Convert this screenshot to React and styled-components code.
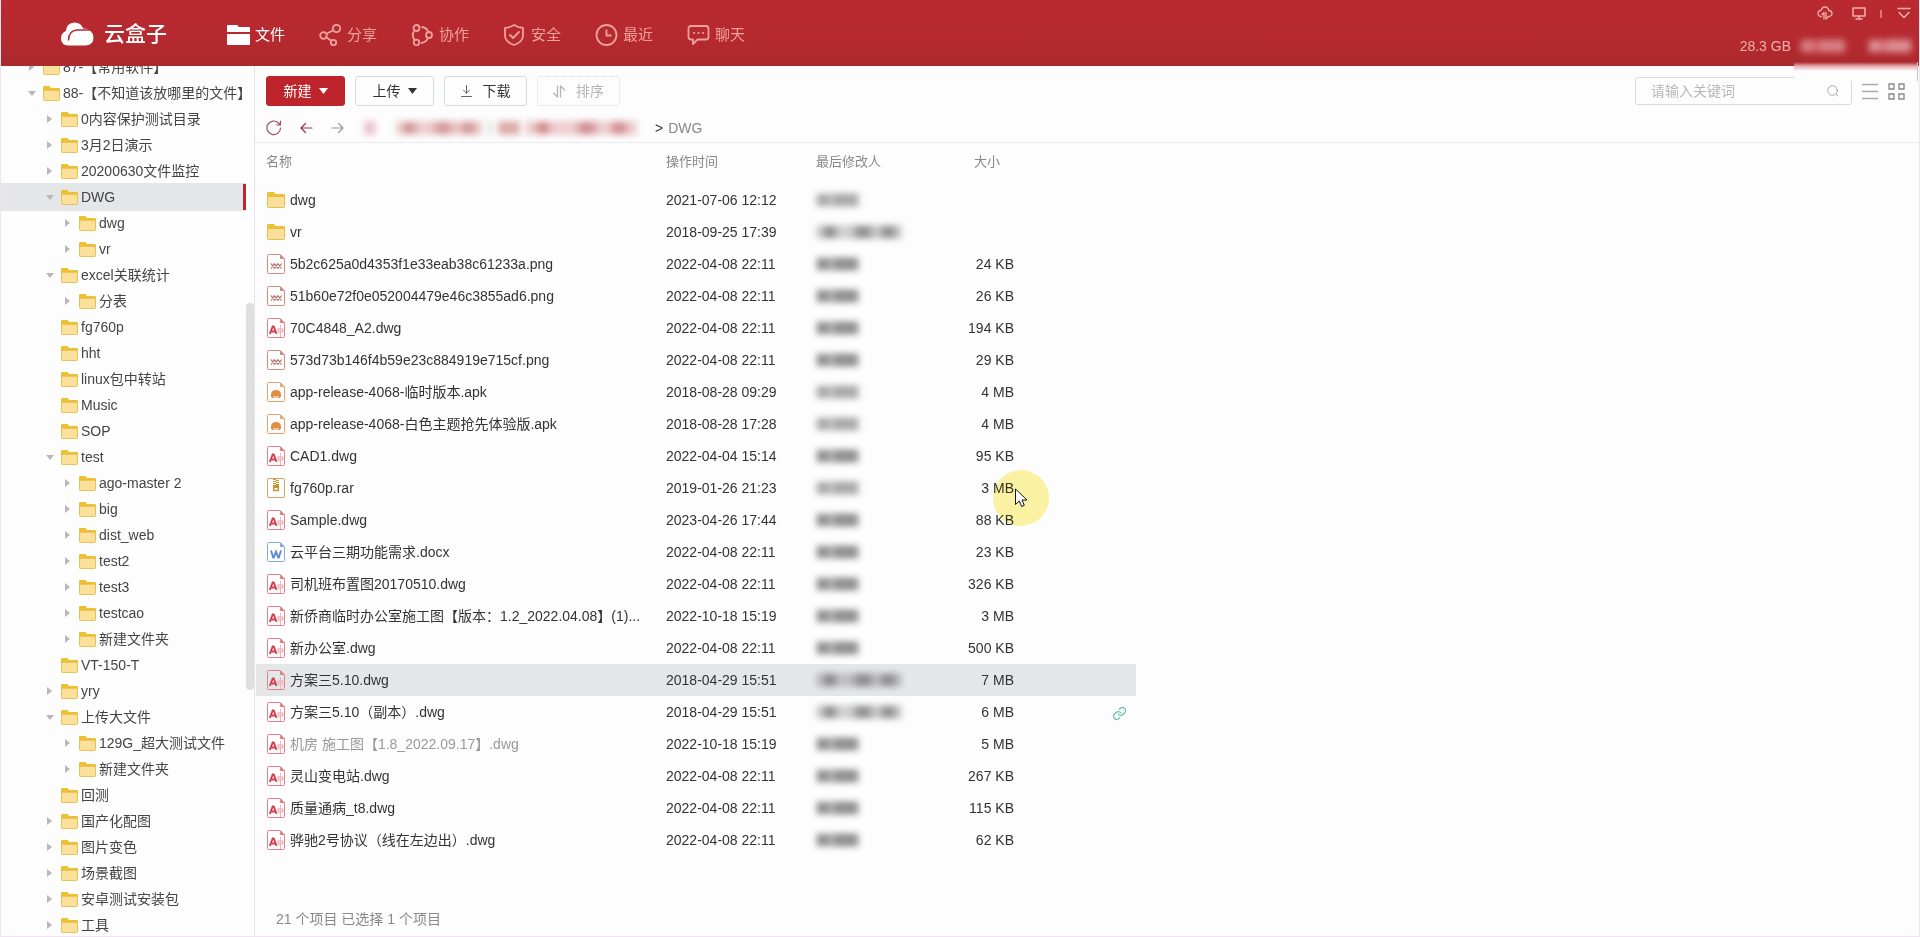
import styled, { createGlobalStyle } from "styled-components";

const GlobalStyle = createGlobalStyle`
  * {
    box-sizing: border-box;
  }
  body {
    margin: 0;
    background: #fdfdfd;
    color: #333;
    font-family: "Liberation Sans", "Noto Sans CJK SC", sans-serif;
    font-size: 14px;
    line-height: 20px;
  }
  button, input {
    font-family: inherit;
    font-size: 14px;
    line-height: 20px;
  }
  button {
    padding: 0;
    border: 0;
    background: none;
    color: inherit;
    cursor: pointer;
  }
  svg {
    display: block;
    flex: none;
  }
`;

const Page = styled.div`
  display: flex;
  flex-direction: column;
  height: 100vh;
  border: 1px solid #f0e4f0;
  border-top: 0;
  overflow: hidden;
`;

/* ---------- header ---------- */
const Header = styled.header`
  position: relative;
  display: flex;
  flex: none;
  height: 66px;
  margin: 0 -1px;
  padding-left: 61px;
  background: linear-gradient(#ba2a30, #b5292f 60%, #aa2a2d);
  color: #fff;
`;

const Logo = styled.a`
  display: flex;
  align-items: center;
  gap: 10px;
  width: 166px;
  padding-top: 2px;
  color: #fff;
  font-size: 21px;
  font-weight: 500;
  line-height: 28px;
  text-decoration: none;
`;

const Nav = styled.nav`
  display: flex;
  padding-top: 3px;
`;

const NavLink = styled.a`
  display: flex;
  align-items: center;
  gap: 5px;
  width: 92px;
  color: ${(p) => (p.$active ? "#fff" : "#f0a19d")};
  font-size: 15px;
  white-space: nowrap;
  text-decoration: none;
`;

const HeaderRight = styled.div`
  display: flex;
  flex-direction: column;
  align-items: flex-end;
  margin-left: auto;
  color: #f0b0aa;
`;

const WindowTools = styled.div`
  display: flex;
  align-items: center;
  height: 26px;
  gap: 19px;
  padding-right: 9px;
`;

const Separator = styled.span`
  width: 2px;
  height: 8px;
  margin: 2px -4px 0 -5px;
  background: #d67a78;
`;

const Account = styled.div`
  display: flex;
  align-items: center;
  height: 40px;
  gap: 22px;
  padding-right: 8px;
`;

const Quota = styled.span`
  margin-right: -13px;
`;

const Haze = styled.div`
  position: absolute;
  right: 2px;
  bottom: -15px;
  width: 124px;
  height: 19px;
  border-right: 1px solid #c9bfc4;
  background: linear-gradient(#b02a2e00, #e3a7ab 4px, #fdfdfd 9px);
`;

/* ---------- masked text ---------- */
const Mask = styled.span`
  display: block;
  width: ${(p) => p.$w}px;
  height: 14px;
  background: radial-gradient(circle at 16% 50%, ${(p) => p.$tone} 2px, transparent 10px),
    radial-gradient(circle at 55% 50%, ${(p) => p.$tone} 1px, transparent 14px),
    radial-gradient(circle at 84% 50%, ${(p) => p.$tone} 1px, transparent 12px), ${(p) => p.$base};
  filter: blur(3px);
  opacity: ${(p) => p.$opacity || 1};
`;

/* ---------- sidebar ---------- */
const Body = styled.div`
  display: flex;
  flex: 1;
  min-height: 0;
`;

const Sidebar = styled.aside`
  position: relative;
  flex: none;
  width: 254px;
  border-right: 1px solid #f0dcee;
  overflow: hidden;
`;

const Tree = styled.ul`
  margin: -12px 8px 0 0;
  padding: 0;
  list-style: none;
`;

const TreeItem = styled.button`
  display: flex;
  align-items: center;
  width: 100%;
  height: 26px;
  padding-left: ${(p) => 27 + p.$level * 18}px;
  color: #444;
  white-space: nowrap;
  ${(p) =>
    p.$active &&
    `
    background: #e5e6e8;
    border-right: 3px solid #bb2730;
    box-shadow: 0 -1px #e5e6e8, 0 1px #e5e6e8;
  `}
`;

const Arrow = styled.span`
  display: flex;
  width: 8px;
  margin-right: 7px;
`;

const TreeLabel = styled.span`
  margin-left: 3px;
`;

const ScrollThumb = styled.div`
  position: absolute;
  top: 237px;
  right: 0;
  width: 8px;
  height: 387px;
  border-radius: 4px;
  background: #dfdfe1;
`;

/* ---------- main ---------- */
const Main = styled.main`
  display: flex;
  flex: 1;
  flex-direction: column;
  min-width: 0;
`;

const Toolbar = styled.div`
  display: flex;
  align-items: center;
  gap: 10px;
  padding: 10px 14px 0 11px;
`;

const ToolButton = styled.button`
  display: flex;
  align-items: center;
  justify-content: center;
  gap: ${(p) => (p.$wide ? 11 : 7)}px;
  width: ${(p) => (p.$wide ? 83 : 79)}px;
  height: 30px;
  border: 1px solid #d5dcdc;
  border-radius: 3px;
  color: #333;
  ${(p) => p.$primary && "background: #bd242b; border-color: #bd242b; color: #fff;"}
  &:disabled {
    border: 1px dotted #dcdcdc;
    color: #b4b4b4;
    cursor: default;
  }
`;

const SearchBox = styled.label`
  display: flex;
  align-items: center;
  width: 217px;
  height: 28px;
  margin-left: auto;
  padding: 0 12px 0 15px;
  border: 1px solid #d5dcdc;
  border-radius: 3px;
  input {
    flex: 1;
    min-width: 0;
    padding: 0;
    border: 0;
    outline: 0;
    background: none;
  }
  input::placeholder {
    color: #b8b8b8;
    opacity: 1;
  }
`;

const Crumbs = styled.div`
  display: flex;
  align-items: center;
  height: 37px;
  padding: 7px 0 0 11px;
  border-bottom: 1px solid #ebe8ec;
  color: #888;
`;

const CrumbTools = styled.div`
  display: flex;
  gap: 18px;
  margin-right: 20px;
`;

const CrumbPath = styled.div`
  display: flex;
  align-items: center;
  gap: 5px;
  margin-right: 18px;
`;

const Chevron = styled.span`
  margin-right: 5px;
  color: #333;
`;

const FileArea = styled.div`
  position: relative;
  flex: 1;
  min-height: 0;
  padding-left: 1px;
`;

const FileTable = styled.table`
  width: 100%;
  max-width: 880px;
  border-collapse: collapse;
  table-layout: fixed;
  th {
    height: 41px;
    padding: 0 0 3px;
    color: #888;
    font-size: 13px;
    font-weight: 400;
    text-align: left;
  }
  td {
    height: 32px;
    padding: 0;
    white-space: nowrap;
  }
  th:first-child {
    padding-left: 10px;
  }
  td:first-child {
    padding-left: 11px;
  }
`;

const Col = styled.col`
  width: ${(p) => p.$w}px;
`;

const SizeHead = styled.th`
  &&& {
    padding-right: 14px;
    text-align: right;
  }
`;

const FileRow = styled.tr`
  background: ${(p) => (p.$selected ? "#e5e6e8" : "transparent")};
`;

const FileName = styled.div`
  display: flex;
  align-items: center;
  gap: 5px;
  color: ${(p) => (p.$muted ? "#999" : "#333")};
`;

const SizeCell = styled.td`
  text-align: right;
`;

const LinkCell = styled.td`
  svg {
    margin: 2px 9px 0 auto;
  }
`;

const Footer = styled.footer`
  flex: none;
  height: 27px;
  padding-left: 21px;
  color: #888;
`;

const Pointer = styled.div`
  position: absolute;
  top: 327px;
  left: 738px;
  width: 56px;
  height: 56px;
  border-radius: 50%;
  background: #fdf3a3;
  mix-blend-mode: multiply;
  pointer-events: none;
`;

const PointerArrow = styled.svg`
  position: absolute;
  top: 345px;
  left: 760px;
  pointer-events: none;
`;

/* ---------- icons ---------- */
const FolderIcon = ({ large }) => (
  <svg width={large ? 18 : 17} height={large ? 16 : 15} viewBox="0 0 18 16" preserveAspectRatio="none">
    <path d="M0 1.500Q0 0 1.500 0H7l1.500 2H16.500Q18 2 18 3.500V8H0z" fill="#edc02f" />
    <path d="M.5 4.500h17v10q0 1-1 1h-15q-1 0-1-1z" fill="#fae09a" stroke="#e6bd4e" />
  </svg>
);

const fileColors = { png: "#cf8d83", dwg: "#dc8488", apk: "#e0a878", rar: "#cdaa68", docx: "#8aa9e0" };

const FileIcon = ({ type }) => {
  if (type === "folder") return <FolderIcon large />;
  const color = fileColors[type];
  return (
    <svg width="18" height="20" viewBox="0 0 18 20" fill="none">
      {type === "rar" ? (
        <rect x=".5" y=".5" width="17" height="19" rx="1.500" stroke={color} />
      ) : (
        <>
          <path d="M13 .5H1.500Q.5.5.5 1.500v17q0 1 1 1h15q1 0 1-1V5z" stroke={color} />
          <path d="M13 0v5h5z" fill={color} />
        </>
      )}
      {type === "png" && (
        <path
          d="M4 9.500l3.500 5M7.500 9.500l-3.500 5M7.500 9.500l3.500 5M11 9.500l-3.500 5M11 9.500l3.500 5M14.500 9.500l-3.500 5"
          stroke="#b9695c"
          strokeWidth="1.200"
        />
      )}
      {type === "dwg" && (
        <>
          <path d="M2.800 16L5.700 8.500h1L9.600 16M4 13.500h4.500" stroke="#d43f50" strokeWidth="1.900" />
          <path d="M10 12.500h7M13.500 7v12M11.500 10.500h4v4h-4z" stroke="#f0b4ba" />
        </>
      )}
      {type === "apk" && (
        <path d="M4 15v-2q0-5 5-5t5 5v2h-1v1h-1.500v-2h-1v2H9.500v-2h-1v2H7.500v-2h-1v2H5v-1z" fill="#e08c42" />
      )}
      {type === "rar" && (
        <>
          <path d="M7.500 1v6M10.500 2v6" stroke="#cd9a35" strokeWidth="3" strokeDasharray="1 1" />
          <path d="M6.700 7.500h4.600v5H6.700z" stroke="#c8922c" strokeWidth="1.400" />
          <path d="M6 7h6v3H6z" fill="#c8922c" />
        </>
      )}
      {type === "docx" && (
        <path d="M4 8.500l2.200 7h.6L9 9.500l2.200 6h.6l2.200-7" stroke="#5d85dc" strokeWidth="1.800" />
      )}
    </svg>
  );
};

const line = { fill: "none", stroke: "currentColor", strokeLinecap: "round", strokeLinejoin: "round" };

const LogoIcon = () => (
  <svg width="33" height="24" viewBox="0 0 33 24">
    <path
      d="M7.500 23.500Q0 23 0 16.500Q0 11 4.800 9Q5.500 1 13.500.5q6.500 0 8.700 6Q31.500 6.500 32.500 15.500q0 7.500-7.500 8z"
      fill="#fff"
    />
    <path d="M7.500 18.500Q7.500 8.500 16 8H29.500" fill="none" stroke="#b5292f" strokeWidth="1.500" />
  </svg>
);

const navIcons = {
  file: (
    <svg width="23" height="22" viewBox="0 0 23 22" fill="currentColor">
      <path d="M0 2q0-1 1-1h9l2 2h10q1 0 1 1v4H0z" />
      <path d="M0 10h23v10q0 1-1 1H1q-1 0-1-1z" />
    </svg>
  ),
  share: (
    <svg width="23" height="22" viewBox="0 0 23 22" {...line} strokeWidth="1.800">
      <circle cx="4.500" cy="11.500" r="3.300" />
      <circle cx="17.500" cy="4.500" r="3.700" />
      <circle cx="14.500" cy="18.500" r="2.700" />
      <path d="M7.500 9.800L14.300 6.300M7.200 13.300l5 3.500" />
    </svg>
  ),
  team: (
    <svg width="23" height="22" viewBox="0 0 23 22" {...line} strokeWidth="1.800">
      <circle cx="5.500" cy="4" r="3" />
      <circle cx="5.500" cy="18.500" r="2.800" />
      <circle cx="18" cy="11" r="3" />
      <path d="M3.500 6.500Q0 11 3.500 15.800M11 3q5 1 6 4.500M10.500 19q5-1 6.500-5" />
    </svg>
  ),
  safe: (
    <svg width="23" height="22" viewBox="0 0 23 22" {...line} strokeWidth="1.800">
      <path d="M11 1Q7 3.500 2 4v8q.5 6 9 9 8.500-3 9-9V4Q15 3.500 11 1z" />
      <path d="M7 11l3 3 6-6" />
    </svg>
  ),
  recent: (
    <svg width="23" height="22" viewBox="0 0 23 22" {...line} strokeWidth="1.800">
      <circle cx="11.500" cy="11" r="10" />
      <path d="M11.500 5.500v6h5" strokeLinecap="butt" strokeLinejoin="miter" />
    </svg>
  ),
  chat: (
    <svg width="23" height="22" viewBox="0 0 23 22" {...line} strokeWidth="1.800">
      <path d="M4 2h15q2.500 0 2.500 2.500v8.500q0 2.500-2.500 2.500h-8.500L6 20v-4.500H4Q1.500 15.500 1.500 13V4.500Q1.500 2 4 2z" />
      <path d="M7 9h.1M11.500 9h.1M16 9h.1" strokeWidth="2.200" />
    </svg>
  ),
};

const TriangleDown = ({ color = "currentColor", w = 9, h = 6 }) => (
  <svg width={w} height={h} viewBox="0 0 10 6" preserveAspectRatio="none">
    <path d="M0 0h10L5 6z" fill={color} />
  </svg>
);

const TriangleRight = () => (
  <svg width="6" height="8" viewBox="0 0 6 8">
    <path d="M1 0l5 4-5 4z" fill="#b8b8b8" />
  </svg>
);

/* ---------- data ---------- */
const nav = [
  ["file", "文件"],
  ["share", "分享"],
  ["team", "协作"],
  ["safe", "安全"],
  ["recent", "最近"],
  ["chat", "聊天"],
];

// [level, name, state]: state is "closed", "open" or "leaf"
const tree = [
  [0, "87-【常用软件】", "closed"],
  [0, "88-【不知道该放哪里的文件】", "open"],
  [1, "0内容保护测试目录", "closed"],
  [1, "3月2日演示", "closed"],
  [1, "20200630文件监控", "closed"],
  [1, "DWG", "open"],
  [2, "dwg", "closed"],
  [2, "vr", "closed"],
  [1, "excel关联统计", "open"],
  [2, "分表", "closed"],
  [1, "fg760p", "leaf"],
  [1, "hht", "leaf"],
  [1, "linux包中转站", "leaf"],
  [1, "Music", "leaf"],
  [1, "SOP", "leaf"],
  [1, "test", "open"],
  [2, "ago-master 2", "closed"],
  [2, "big", "closed"],
  [2, "dist_web", "closed"],
  [2, "test2", "closed"],
  [2, "test3", "closed"],
  [2, "testcao", "closed"],
  [2, "新建文件夹", "closed"],
  [1, "VT-150-T", "leaf"],
  [1, "yry", "closed"],
  [1, "上传大文件", "open"],
  [2, "129G_超大测试文件", "closed"],
  [2, "新建文件夹", "closed"],
  [1, "回测", "leaf"],
  [1, "国产化配图", "closed"],
  [1, "图片变色", "closed"],
  [1, "场景截图", "closed"],
  [1, "安卓测试安装包", "closed"],
  [1, "工具", "closed"],
];

const files = [
  { type: "folder", name: "dwg", time: "2021-07-06 12:12", size: "", soft: true },
  { type: "folder", name: "vr", time: "2018-09-25 17:39", size: "", long: true },
  { type: "png", name: "5b2c625a0d4353f1e33eab38c61233a.png", time: "2022-04-08 22:11", size: "24 KB" },
  { type: "png", name: "51b60e72f0e052004479e46c3855ad6.png", time: "2022-04-08 22:11", size: "26 KB" },
  { type: "dwg", name: "70C4848_A2.dwg", time: "2022-04-08 22:11", size: "194 KB" },
  { type: "png", name: "573d73b146f4b59e23c884919e715cf.png", time: "2022-04-08 22:11", size: "29 KB" },
  { type: "apk", name: "app-release-4068-临时版本.apk", time: "2018-08-28 09:29", size: "4 MB", soft: true },
  { type: "apk", name: "app-release-4068-白色主题抢先体验版.apk", time: "2018-08-28 17:28", size: "4 MB", soft: true },
  { type: "dwg", name: "CAD1.dwg", time: "2022-04-04 15:14", size: "95 KB" },
  { type: "rar", name: "fg760p.rar", time: "2019-01-26 21:23", size: "3 MB", soft: true },
  { type: "dwg", name: "Sample.dwg", time: "2023-04-26 17:44", size: "88 KB" },
  { type: "docx", name: "云平台三期功能需求.docx", time: "2022-04-08 22:11", size: "23 KB" },
  { type: "dwg", name: "司机班布置图20170510.dwg", time: "2022-04-08 22:11", size: "326 KB" },
  { type: "dwg", name: "新侨商临时办公室施工图【版本：1.2_2022.04.08】(1)...", time: "2022-10-18 15:19", size: "3 MB" },
  { type: "dwg", name: "新办公室.dwg", time: "2022-04-08 22:11", size: "500 KB" },
  { type: "dwg", name: "方案三5.10.dwg", time: "2018-04-29 15:51", size: "7 MB", long: true, selected: true },
  { type: "dwg", name: "方案三5.10（副本）.dwg", time: "2018-04-29 15:51", size: "6 MB", long: true, link: true },
  { type: "dwg", name: "机房 施工图【1.8_2022.09.17】.dwg", time: "2022-10-18 15:19", size: "5 MB", muted: true },
  { type: "dwg", name: "灵山变电站.dwg", time: "2022-04-08 22:11", size: "267 KB" },
  { type: "dwg", name: "质量通病_t8.dwg", time: "2022-04-08 22:11", size: "115 KB" },
  { type: "dwg", name: "骅驰2号协议（线在左边出）.dwg", time: "2022-04-08 22:11", size: "62 KB" },
];

const TopBar = () => (
  <Header>
    <Logo href="#">
      <LogoIcon />
      云盒子
    </Logo>
    <Nav>
      {nav.map(([key, label]) => (
        <NavLink key={key} href={`#${key}`} $active={key === "file"}>
          {navIcons[key]}
          {label}
        </NavLink>
      ))}
    </Nav>
    <HeaderRight>
      <WindowTools>
        <button aria-label="传输">
          <svg width="16" height="14" viewBox="0 0 16 14" {...line} strokeWidth="1.300">
            <path d="M4.500 10.500Q1 10.500 1 7.500T4 4.500Q5 1 8 1t4 3.500q3 .2 3 3t-3.500 3" />
            <path d="M7 13V6.500L5 8.500M9 6.500V13l2-2" />
          </svg>
        </button>
        <button aria-label="桌面">
          <svg width="14" height="13" viewBox="0 0 14 13" {...line} strokeWidth="1.500">
            <path d="M1 1h12v8H1zM7 9v3M4 12h6" />
          </svg>
        </button>
        <Separator />
        <button aria-label="收起">
          <svg width="14" height="12" viewBox="0 0 14 12" {...line} strokeWidth="1.500">
            <path d="M1 1.500h12M2 5.500l5 5 5-5" />
          </svg>
        </button>
      </WindowTools>
      <Account>
        <Quota>28.3 GB</Quota>
        <Mask $w={46} $base="#c4484e" $tone="#dc8a8e" />
        <Mask $w={44} $base="#c65057" $tone="#e09a9e" />
      </Account>
    </HeaderRight>
    <Haze />
  </Header>
);

const FolderTree = () => (
  <Sidebar>
    <Tree>
      {tree.map(([level, name, state], i) => (
        <li key={i}>
          <TreeItem $level={level} $active={name === "DWG"}>
            <Arrow>
              {state === "open" && <TriangleDown color="#b8b8b8" w={8} h={5} />}
              {state === "closed" && <TriangleRight />}
            </Arrow>
            <FolderIcon />
            <TreeLabel>{name}</TreeLabel>
          </TreeItem>
        </li>
      ))}
    </Tree>
    <ScrollThumb />
  </Sidebar>
);

const FileList = () => (
  <FileArea>
    <FileTable>
      <colgroup>
        <Col $w={410} />
        <Col $w={150} />
        <Col $w={104} />
        <Col $w={94} />
        <Col $w={122} />
      </colgroup>
      <thead>
        <tr>
          <th>名称</th>
          <th>操作时间</th>
          <th>最后修改人</th>
          <SizeHead>大小</SizeHead>
          <th />
        </tr>
      </thead>
      <tbody>
        {files.map((file) => (
          <FileRow key={file.name} $selected={file.selected}>
            <td>
              <FileName $muted={file.muted}>
                <FileIcon type={file.type} />
                {file.name}
              </FileName>
            </td>
            <td>{file.time}</td>
            <td>
              <Mask
                $w={file.long ? 86 : 43}
                $base={file.selected ? "#bdbdbf" : "#ccc"}
                $tone="#777"
                $opacity={file.soft ? 0.7 : 0.9}
              />
            </td>
            <SizeCell>{file.size}</SizeCell>
            <LinkCell>
              {file.link && (
                <svg width="15" height="15" viewBox="0 0 24 24" {...line} stroke="#6dbfb2" strokeWidth="2">
                  <path d="M10 13a5 5 0 0 0 7.500.5l3-3a5 5 0 0 0-7-7l-1.700 1.700" />
                  <path d="M14 11a5 5 0 0 0-7.500-.5l-3 3a5 5 0 0 0 7 7l1.700-1.700" />
                </svg>
              )}
            </LinkCell>
          </FileRow>
        ))}
      </tbody>
    </FileTable>
    <Pointer />
    <PointerArrow width="13" height="20" viewBox="0 0 13 20">
      <path d="M.5 1v15.500l3.700-3.500 2.500 5.500 2.600-1.200L7 12h5z" fill="#fff" stroke="#111" />
    </PointerArrow>
  </FileArea>
);

const App = () => {
  return (
    <Page>
      <GlobalStyle />
      <TopBar />
      <Body>
        <FolderTree />
        <Main>
          <Toolbar>
            <ToolButton $primary>
              新建 <TriangleDown />
            </ToolButton>
            <ToolButton>
              上传 <TriangleDown />
            </ToolButton>
            <ToolButton $wide>
              <svg width="11" height="12" viewBox="0 0 11 12" {...line} stroke="#666">
                <path d="M5.500.5v7.500M2.500 5.200l3 3 3-3M.5 11.500h10" />
              </svg>
              下载
            </ToolButton>
            <ToolButton $wide disabled>
              <svg width="12" height="13" viewBox="0 0 12 13" {...line} strokeWidth="1.300">
                <path d="M4.500 1v11L.5 8M7.500 12V1l4 4" />
              </svg>
              排序
            </ToolButton>
            <SearchBox>
              <input type="text" placeholder="请输入关键词" aria-label="请输入关键词" />
              <svg width="12" height="12" viewBox="0 0 12 12" {...line} stroke="#aaa">
                <circle cx="5.500" cy="5.500" r="4.800" />
                <path d="M9 9l2 2" />
              </svg>
            </SearchBox>
            <button aria-label="列表">
              <svg width="16" height="17" viewBox="0 0 16 17" stroke="#aaa" strokeWidth="1.500">
                <path d="M0 1.500h16M0 8.500h16M0 15.500h16" />
              </svg>
            </button>
            <button aria-label="网格">
              <svg width="17" height="17" viewBox="0 0 17 17" fill="none" stroke="#888" strokeWidth="1.300">
                <path d="M1 1h5v5H1zM11 1h5v5h-5zM1 11h5v5H1zM11 11h5v5h-5z" />
              </svg>
            </button>
          </Toolbar>
          <Crumbs>
            <CrumbTools>
              <button aria-label="刷新">
                <svg width="16" height="16" viewBox="0 0 16 16" {...line} stroke="#a84a62" strokeWidth="1.200">
                  <path d="M14.500 8a6.800 6.800 0 1 1-2-5l1.500 1.500M14.500 1v4h-4" />
                </svg>
              </button>
              <button aria-label="后退">
                <svg width="13" height="16" viewBox="0 0 13 16" {...line} stroke="#a03050" strokeWidth="1.200">
                  <path d="M12 8H1M5.500 3.500L1 8l4.500 4.500" />
                </svg>
              </button>
              <button aria-label="前进">
                <svg width="13" height="16" viewBox="0 0 13 16" {...line} stroke="#999" strokeWidth="1.200">
                  <path d="M1 8h11M7.500 3.500L12 8l-4.500 4.500" />
                </svg>
              </button>
            </CrumbTools>
            <CrumbPath>
              <Mask $w={12} $base="#f4dde5" $tone="#ebc4d2" />
              <Mask $w={10} $base="transparent" $tone="transparent" />
              <Mask $w={86} $base="#edd0d0" $tone="#cf8f91" />
              <Mask $w={6} $base="#f1f1f1" $tone="#e6e6e6" />
              <Mask $w={22} $base="#f0d8d8" $tone="#dba8a8" />
              <Mask $w={112} $base="#edcfd0" $tone="#cc7f84" />
            </CrumbPath>
            <Chevron>&gt;</Chevron>
            DWG
          </Crumbs>
          <FileList />
          <Footer>21 个项目 已选择 1 个项目</Footer>
        </Main>
      </Body>
    </Page>
  );
};

export default App;
